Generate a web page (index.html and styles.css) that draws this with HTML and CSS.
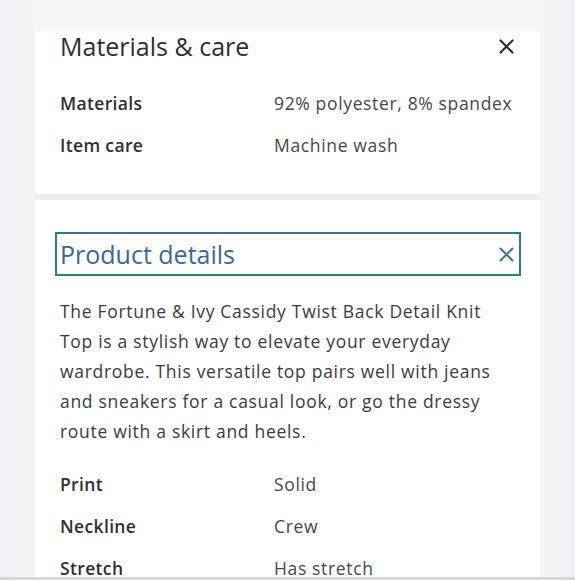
FILE: index.html
```html
<!DOCTYPE html>
<html lang="en">
<head>
<meta charset="utf-8">
<title>Materials &amp; care</title>
<link rel="stylesheet" href="styles.css">
</head>
<body>
<div class="frame">
  <div class="page">
    <section class="card card-top">
      <div class="head">
        <h2 class="title">Materials &amp; care</h2>
        <svg class="close" width="15" height="15" viewBox="0 0 15 15"><path d="M1.5 1.5 L13.5 13.5 M13.5 1.5 L1.5 13.5" stroke="#2e2f32" stroke-width="2.2" stroke-linecap="round" fill="none"/></svg>
      </div>
      <div class="rows">
        <div class="row"><span class="label">Materials</span><span class="value">92% polyester, 8% spandex</span></div>
        <div class="row"><span class="label">Item care</span><span class="value">Machine wash</span></div>
      </div>
    </section>
    <div class="sep"></div>
    <section class="card card-bottom">
      <div class="head focus">
        <h2 class="title blue">Product details</h2>
        <svg class="close" width="15" height="15" viewBox="0 0 15 15"><path d="M1.5 1.5 L13.5 13.5 M13.5 1.5 L1.5 13.5" stroke="#4b6f8f" stroke-width="2" stroke-linecap="round" fill="none"/></svg>
      </div>
      <p class="desc">The Fortune &amp; Ivy Cassidy Twist Back Detail Knit Top is a stylish way to elevate your everyday wardrobe. This versatile top pairs well with jeans and sneakers for a casual look, or go the dressy route with a skirt and heels.</p>
      <div class="rows rows2">
        <div class="row"><span class="label">Print</span><span class="value">Solid</span></div>
        <div class="row"><span class="label">Neckline</span><span class="value">Crew</span></div>
        <div class="row"><span class="label">Stretch</span><span class="value">Has stretch</span></div>
      </div>
    </section>
  </div>
  <div class="bar"></div>
</div>
</body>
</html>
```
FILE: styles.css
```css
html, body {
  margin: 0;
  padding: 0;
  overflow: hidden;
}
body {
  background: linear-gradient(90deg, #eef1f3 0%, #f5f5f6 6%, #f5f5f6 94%, #eef1f3 100%);
  font-family: "Open Sans", Lato, sans-serif;
  color: #2e2f32;
}
.frame {
  position: relative;
  height: 580px;
  overflow: hidden;
}
.page {
  padding: 31px 0 0 35px;
  width: 505px;
}
.card {
  background: #fff;
  padding: 0 25px;
  box-sizing: border-box;
}
.card-top {
  height: 163px;
}
.card-bottom {
  padding-top: 32px;
  padding-bottom: 40px;
}
.sep {
  height: 6px;
  background: #eceef0;
}
.head {
  display: flex;
  justify-content: space-between;
  align-items: center;
  height: 30px;
}
.title {
  margin: 0;
  font-size: 25px;
  line-height: 30px;
  font-weight: 400;
  color: #2e2f32;
}
.title.blue {
  color: #3b6893;
}
.close {
  display: block;
  margin-right: 1.5px;
}
.focus {
  height: 40px;
  border: 2px solid #2f7f7a;
  margin: 0 -6px 0 -5px;
  padding: 0 4px 0 3px;
}
.rows {
  margin-top: 21px;
}
.row {
  display: flex;
  align-items: center;
  height: 42px;
  font-size: 17.5px;
  line-height: 20px;
}
.label {
  width: 214px;
  font-weight: 600;
  letter-spacing: 0.35px;
  color: #2e2f32;
}
.value {
  color: #46474a;
  letter-spacing: 0.65px;
}
.desc {
  margin: 20px 0 0;
  font-size: 17.5px;
  line-height: 30px;
  letter-spacing: 0.7px;
  color: #3a3b3e;
}
.rows2 {
  margin-top: 17px;
}
.bar {
  position: absolute;
  left: 0;
  right: 0;
  bottom: 0;
  height: 3px;
  background: #d5d6d7;
}
```
